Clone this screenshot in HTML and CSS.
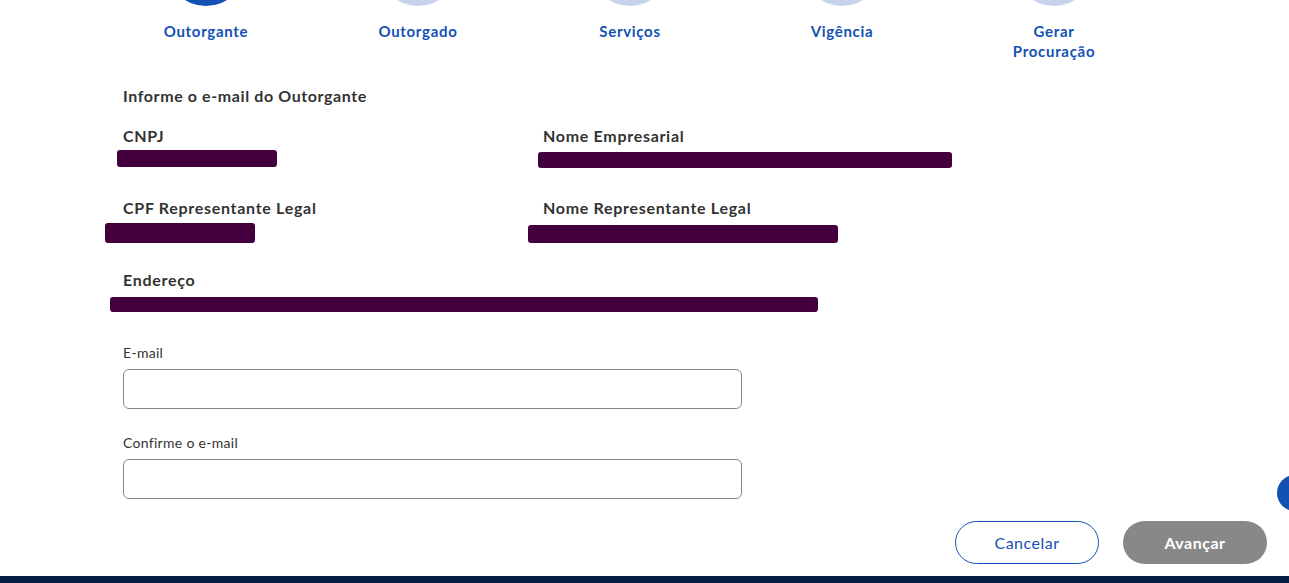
FILE: index.html
```html
<!DOCTYPE html>
<html lang="pt-BR">
<head>
    <meta charset="UTF-8">
    <meta name="viewport" content="width=device-width, initial-scale=1.0">
    <title>Procuração - Outorgante</title>
    <link rel="stylesheet" href="styles.css">
</head>
<body>
    <div class="page">
        <div class="wizard-steps">
            <div class="step active">
                <span class="step-circle"></span>
                <span class="step-label">Outorgante</span>
            </div>
            <div class="step">
                <span class="step-circle"></span>
                <span class="step-label">Outorgado</span>
            </div>
            <div class="step">
                <span class="step-circle"></span>
                <span class="step-label">Serviços</span>
            </div>
            <div class="step">
                <span class="step-circle"></span>
                <span class="step-label">Vigência</span>
            </div>
            <div class="step">
                <span class="step-circle"></span>
                <span class="step-label">Gerar<br>Procuração</span>
            </div>
        </div>

        <div class="content">
            <h2 class="title">Informe o e-mail do Outorgante</h2>

            <div class="info-grid">
                <div class="info-item">
                    <div class="info-label">CNPJ</div>
                    <div class="redact r-cnpj"></div>
                </div>
                <div class="info-item">
                    <div class="info-label">Nome Empresarial</div>
                    <div class="redact r-nome"></div>
                </div>
                <div class="info-item">
                    <div class="info-label">CPF Representante Legal</div>
                    <div class="redact r-cpf"></div>
                </div>
                <div class="info-item">
                    <div class="info-label">Nome Representante Legal</div>
                    <div class="redact r-rep"></div>
                </div>
                <div class="info-item wide">
                    <div class="info-label">Endereço</div>
                    <div class="redact r-end"></div>
                </div>
            </div>

            <form class="email-form">
                <div class="form-group">
                    <label for="email">E-mail</label>
                    <input type="email" id="email" name="email">
                </div>
                <div class="form-group">
                    <label for="emailConfirm">Confirme o e-mail</label>
                    <input type="email" id="emailConfirm" name="emailConfirm">
                </div>
            </form>
        </div>

        <div class="actions">
            <button type="button" class="btn btn-secondary">Cancelar</button>
            <button type="button" class="btn btn-primary" disabled>Avançar</button>
        </div>

        <div class="footer"></div>
    </div>

    <span class="float-help"></span>
</body>
</html>
```

FILE: styles.css
```css
html, body {
    margin: 0;
    padding: 0;
    height: 583px;
    overflow: hidden;
}
body {
    font-family: Lato, "Open Sans", sans-serif;
    color: #333;
    background-color: white;
}
.page {
    width: 1289px;
}
.wizard-steps {
    display: grid;
    grid-template-columns: repeat(5, 212px);
    margin-left: 100px;
}
.step {
    display: flex;
    flex-direction: column;
    align-items: center;
}
.step-circle {
    display: block;
    width: 80px;
    height: 80px;
    margin-top: -74px;
    border-radius: 50%;
    background-color: #c5d4eb;
}
.step.active .step-circle {
    background-color: #1351b4;
}
.step-label {
    margin-top: 15px;
    font-size: 15px;
    font-weight: 700;
    line-height: 20px;
    letter-spacing: 0.7px;
    color: #1351b4;
    text-align: center;
}
.content {
    padding-left: 123px;
}
.title {
    margin: 23px 0 0;
    font-size: 16px;
    font-weight: 700;
    line-height: 24px;
    letter-spacing: 0.6px;
    color: #333;
}
.info-grid {
    display: grid;
    grid-template-columns: 420px 420px;
    grid-auto-rows: 72px;
    margin-top: 16px;
}
.info-item.wide {
    grid-column: span 2;
}
.info-label {
    font-size: 16px;
    font-weight: 700;
    line-height: 24px;
    letter-spacing: 0.7px;
    color: #333;
}
.redact {
    margin-top: 2px;
    background-color: #44003e;
    border-radius: 3px;
}
.r-cnpj {
    width: 160px;
    height: 17px;
    margin-left: -6px;
}
.r-nome {
    width: 414px;
    height: 16px;
    margin-left: -5px;
    margin-top: 4px;
}
.r-cpf {
    width: 150px;
    height: 20px;
    margin-left: -18px;
    margin-top: 3px;
}
.r-rep {
    width: 310px;
    height: 18px;
    margin-left: -15px;
    margin-top: 5px;
}
.r-end {
    width: 708px;
    height: 15px;
    margin-left: -13px;
    margin-top: 5px;
}
.email-form {
    margin-top: 3px;
}
.form-group {
    margin-bottom: 24px;
}
.form-group:last-child {
    margin-bottom: 0;
}
label {
    display: block;
    margin-bottom: 6px;
    font-size: 14px;
    line-height: 20px;
    letter-spacing: 0.3px;
    color: #333;
}
input {
    display: block;
    width: 619px;
    height: 40px;
    padding: 0 12px;
    border: 1px solid #888;
    border-radius: 6px;
    box-sizing: border-box;
    font-family: inherit;
    font-size: 14px;
}
.actions {
    display: flex;
    justify-content: flex-end;
    gap: 24px;
    margin-top: 22px;
    padding-right: 22px;
}
.btn {
    width: 144px;
    height: 43px;
    border-radius: 22px;
    font-family: Lato, "Open Sans", sans-serif;
    font-size: 16px;
    letter-spacing: 0.5px;
    cursor: pointer;
}
.btn-secondary {
    background-color: white;
    border: 1px solid #1351b4;
    color: #1351b4;
    font-weight: 400;
}
.btn-primary {
    background-color: #888;
    border: none;
    color: white;
    font-weight: 700;
}
.footer {
    height: 7px;
    margin-top: 12px;
    background-color: #071d41;
}
.float-help {
    position: fixed;
    left: 1277px;
    top: 475px;
    width: 36px;
    height: 36px;
    border-radius: 50%;
    background-color: #1351b4;
}
```
